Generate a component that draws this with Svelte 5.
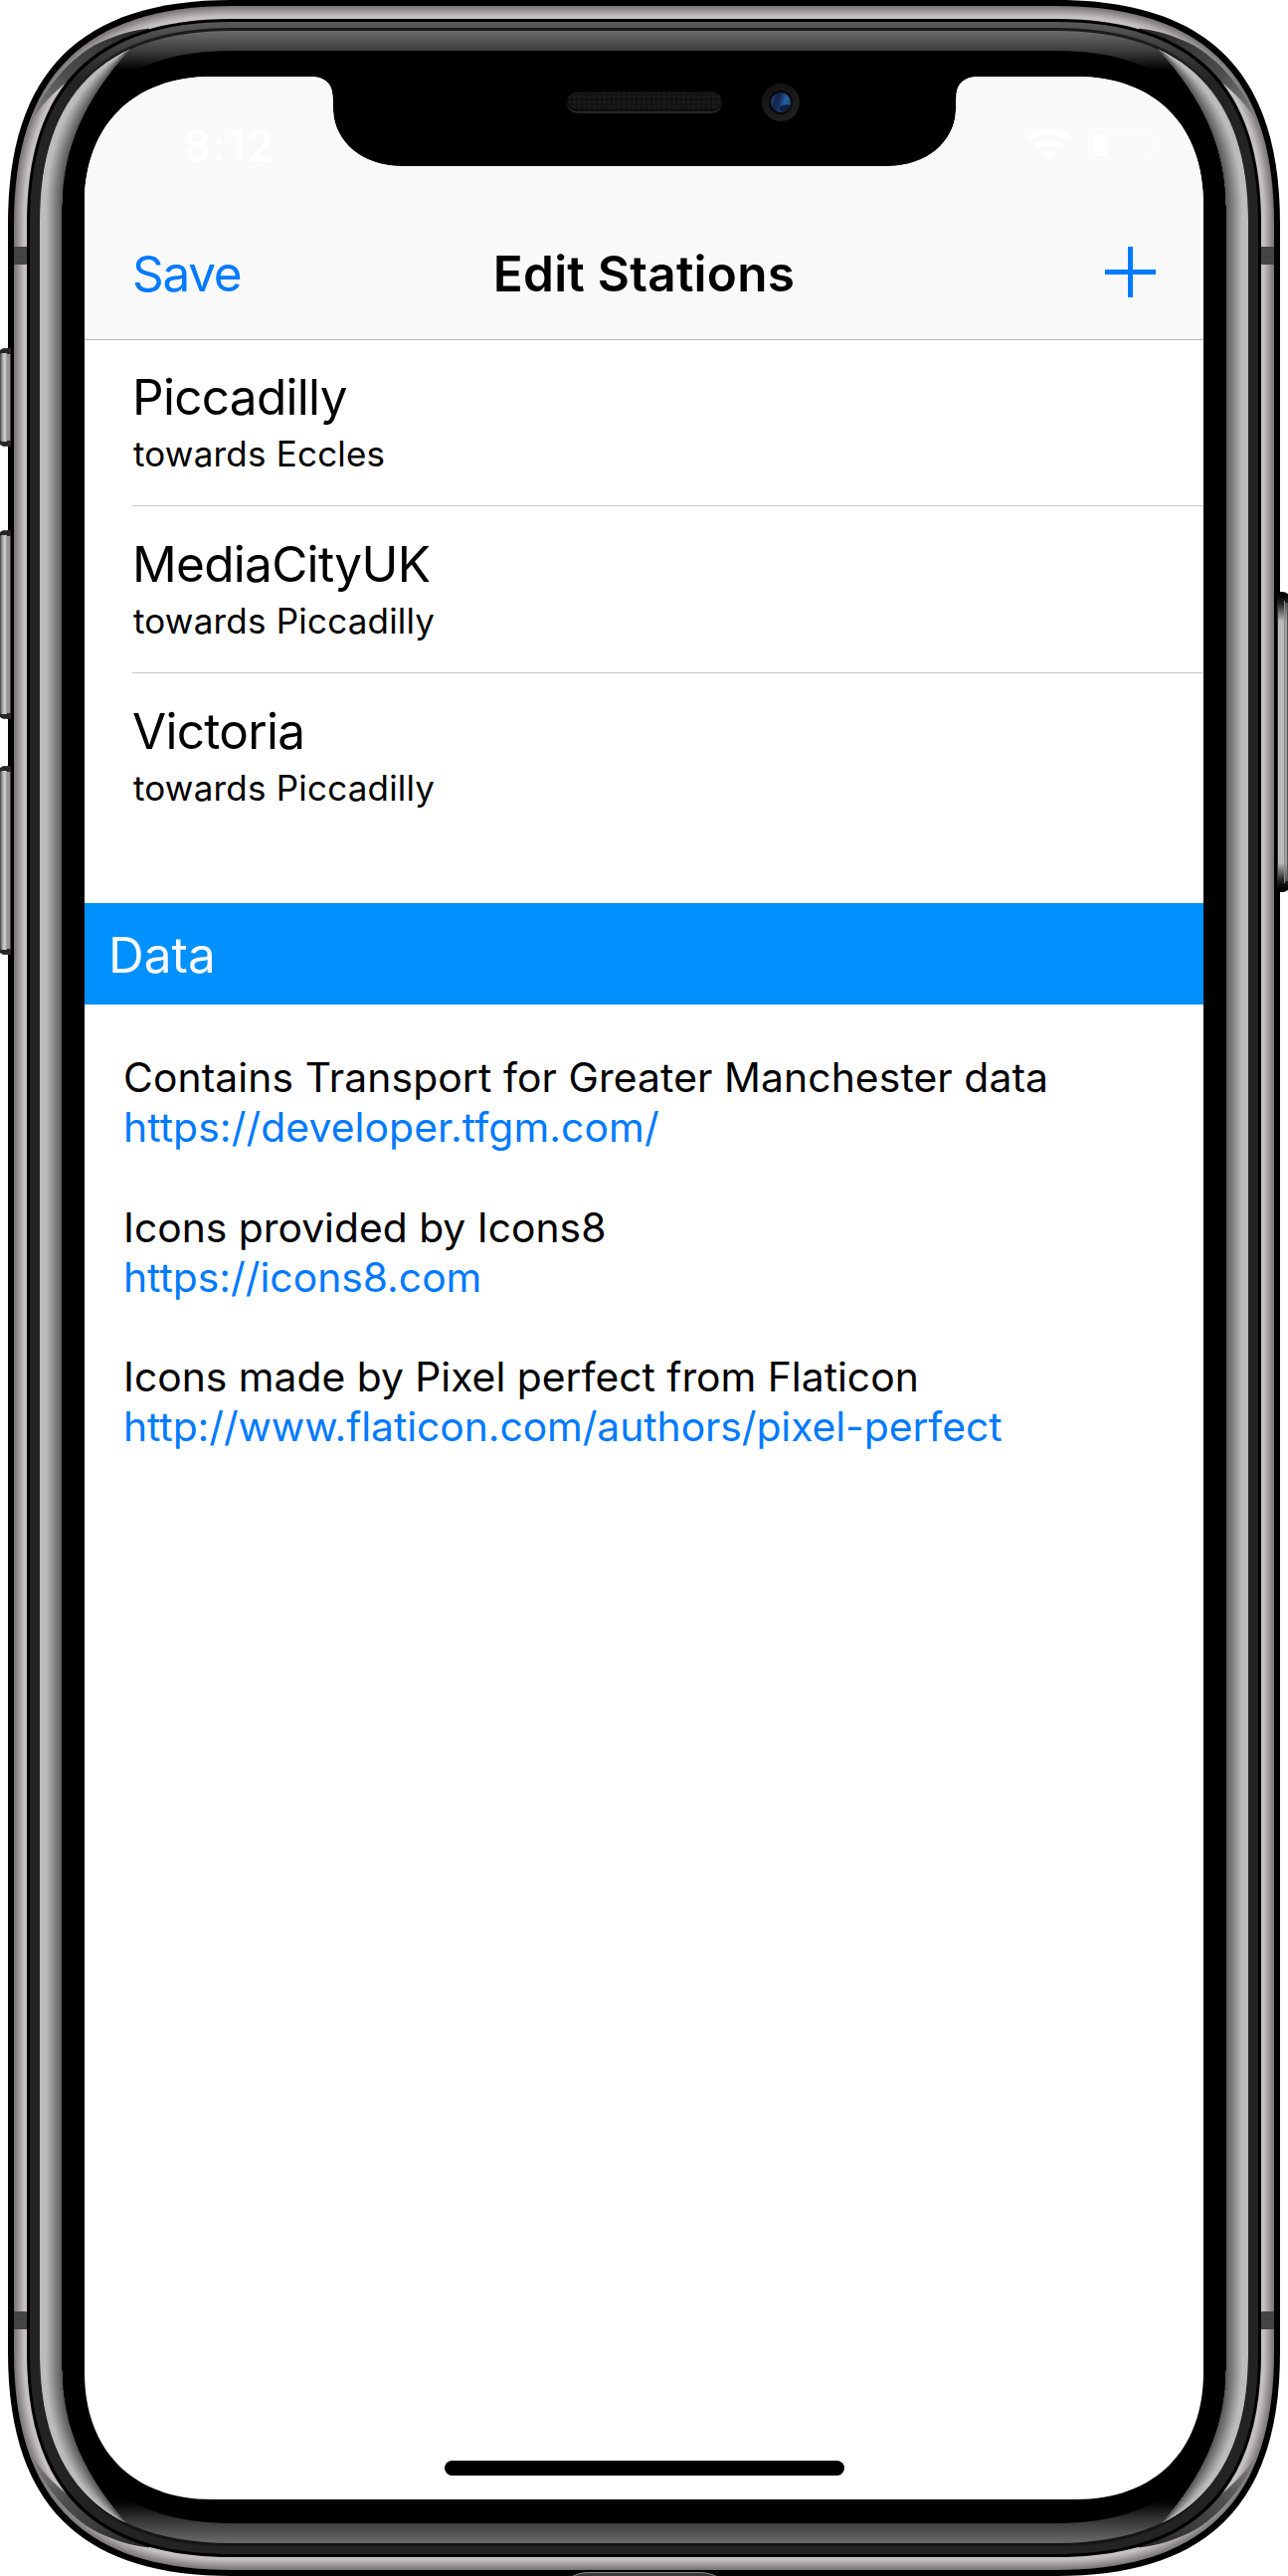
<script>
  const stations = [
    { name: 'Piccadilly', direction: 'towards Eccles' },
    { name: 'MediaCityUK', direction: 'towards Piccadilly' },
    { name: 'Victoria', direction: 'towards Piccadilly' }
  ];

  const credits = [
    { text: 'Contains Transport for Greater Manchester data', url: 'https://developer.tfgm.com/' },
    { text: 'Icons provided by Icons8', url: 'https://icons8.com' },
    { text: 'Icons made by Pixel perfect from Flaticon', url: 'http://www.flaticon.com/authors/pixel-perfect' }
  ];

  // Mute switch, volume up, volume down: top edge and height.
  const keys = [
    [350, 99],
    [533, 190],
    [770, 190]
  ];

  // Continuous-curvature rounded rectangle, inset from the outer edge of the phone.
  function shell(side, top = side, bottom = top) {
    const x0 = 8 + side, x1 = 1287 - side, y0 = top, y1 = 2590 - bottom;
    const r = 225 - side;
    const a = (8 * (55.3 - 0.23 * side) - r) / 3;
    return `M${x0},${y0 + r}C${x0},${y0 + a} ${x0 + a},${y0} ${x0 + r},${y0}` +
      `H${x1 - r}C${x1 - a},${y0} ${x1},${y0 + a} ${x1},${y0 + r}` +
      `V${y1 - r}C${x1},${y1 - a} ${x1 - a},${y1} ${x1 - r},${y1}` +
      `H${x0 + r}C${x0 + a},${y1} ${x0},${y1 - a} ${x0},${y1 - r}Z`;
  }

  const mix = (a, b, t) => Math.round(a + (b - a) * t);

  const rail = Array.from({ length: 13 }, (_, i) => {
    const t = Math.min(1, i / 10);
    return { d: shell(6 + i), fill: `rgb(${mix(122, 198, t)},${mix(118, 194, t)},${mix(120, 196, t)})` };
  });

  // Side reflection: nested blades that share their tips and darken inwards.
  const blades = Array.from({ length: 22 }, (_, i) => {
    const t = i / 22;
    const l = (a, b) => a + (b - a) * t;
    const x = l(40, 62), y = l(213, 207);
    const c1 = [l(40, 62), l(135, 150)], c2 = [l(72, 84), l(75, 100)];
    const v = t < 0.25 ? 188 : mix(188, 88, (t - 0.25) / 0.75);
    const start = i === 0 ? 'M20,213C20,120 60,50 129,40L131,49' : `M${x},${y}C${c1} ${c2} 130,49`;
    const end = i === 0 ? 'L131,2541L129,2550C60,2540 20,2470 20,2377Z' : `C${c2[0]},${2590 - c2[1]} ${c1[0]},${2590 - c1[1]} ${x},${2590 - y}Z`;
    const inner = `C84,100 62,150 62,207V2383C62,2440 84,2490 130,2541`;
    return { d: start + inner + end, fill: `rgb(${v},${v},${v})` };
  });
</script>

{#snippet side()}
  <g clip-path="url(#glass)">
    {#each blades as blade}
      <path d={blade.d} fill={blade.fill} />
    {/each}
    <path d="M130,49C84,100 62,150 62,207M62,2383C62,2440 84,2490 130,2541" fill="none" stroke="#5c5c5c" stroke-width="1.200" />
  </g>
{/snippet}

{#snippet streak()}
  <path
    d="M28,128C42,92 70,57 100,43C115,36 130,31 150,28.500V34L75,76C60,88 40,104 28,128Z"
    fill="url(#streak)"
  />
{/snippet}

<div class="phone">
  <svg class="frame" viewBox="0 0 1295 2590" width="1295" height="2590" aria-hidden="true">
    <defs>
      <clipPath id="glass"><path d={shell(32, 31, 33)} /></clipPath>
      <linearGradient id="lip" gradientUnits="userSpaceOnUse" x1="0" y1="22" x2="0" y2="80">
        <stop offset="0" stop-color="#5a5a5a" />
        <stop offset="0.4" stop-color="#404040" />
        <stop offset="1" stop-color="#232323" />
      </linearGradient>
      <linearGradient id="edge" gradientUnits="userSpaceOnUse" x1="0" y1="0" x2="0" y2="2590">
        <stop offset="0.02" stop-color="#1c1c1c" />
        <stop offset="0.035" stop-color="#232323" />
        <stop offset="0.965" stop-color="#232323" />
        <stop offset="0.98" stop-color="#141414" />
      </linearGradient>
      <linearGradient id="bezel" gradientUnits="userSpaceOnUse" x1="0" y1="0" x2="0" y2="2590">
        <stop offset="0.01197" stop-color="#6c6c6c" />
        <stop offset="0.0197" stop-color="#3c3c3c" />
        <stop offset="0.0274" stop-color="#000" />
        <stop offset="0.971" stop-color="#000" />
        <stop offset="0.9795" stop-color="#3e3e3e" />
        <stop offset="0.98726" stop-color="#6a6a6a" />
      </linearGradient>
      <linearGradient id="streak" gradientUnits="userSpaceOnUse" x1="30" y1="120" x2="130" y2="35">
        <stop offset="0" stop-color="#858384" />
        <stop offset="0.45" stop-color="#4c4c4c" />
        <stop offset="1" stop-color="#2c2c2c" />
      </linearGradient>
      <linearGradient id="key" x1="0" x2="1" y1="0" y2="0">
        <stop offset="0" stop-color="#444" />
        <stop offset="0.2" stop-color="#999" />
        <stop offset="0.4" stop-color="#d2d2d2" />
        <stop offset="0.62" stop-color="#a4a4a4" />
        <stop offset="0.85" stop-color="#8c8c8c" />
        <stop offset="1" stop-color="#333" />
      </linearGradient>
      <linearGradient id="power" x1="0" x2="0" y1="0" y2="1">
        <stop offset="0" stop-color="#000" />
        <stop offset="0.03" stop-color="#222" />
        <stop offset="0.09" stop-color="#bbb" />
        <stop offset="0.91" stop-color="#bbb" />
        <stop offset="0.97" stop-color="#222" />
        <stop offset="1" stop-color="#000" />
      </linearGradient>
      <linearGradient id="lens" x1="0" x2="1" y1="0" y2="0.3">
        <stop offset="0" stop-color="#2a68a0" />
        <stop offset="0.3" stop-color="#14264c" />
        <stop offset="0.5" stop-color="#142a55" />
        <stop offset="0.8" stop-color="#2263a4" />
        <stop offset="1" stop-color="#1a4f88" />
      </linearGradient>
      <linearGradient id="ring" x1="0" x2="0.6" y1="0" y2="1">
        <stop offset="0" stop-color="#101010" />
        <stop offset="1" stop-color="#202020" />
      </linearGradient>
      <pattern id="mesh" width="5" height="5" patternUnits="userSpaceOnUse">
        <rect width="5" height="5" fill="#121212" />
        <rect width="3" height="3" x="1" y="1" fill="#1b1b1b" />
      </pattern>
    </defs>

    {#each keys as [y, h]}
      <rect x="-3" {y} width="16" height={h} rx="9" fill="#262626" />
      <rect x="0" y={y + 5} width="11" height={h - 10} rx="2" fill="url(#key)" />
    {/each}
    <rect x="1278" y="595" width="20" height="302" rx="9" fill="#000" />

    <path d={shell(0)} fill="#000" />
    {#each keys as [y, h]}
      <path d="M7,{y}H11V{y + h}H7Z" fill="#262626" />
      <path d="M7,{y + 6}H11V{y + h - 6}H7Z" fill="#949494" />
      <path d="M10,{y + 6}H11V{y + h - 6}H10Z" fill="#444" />
    {/each}
    <rect x="1284" y="598" width="11" height="296" rx="4" fill="url(#power)" />
    <path d="M1284.500,610V882" stroke="#333" />
    <path d="M1291.500,604V888M1293,606V886" stroke="#8a8a8a" />
    <path d="M1294.500,606V886" stroke="#555" />

    {#each rail as ring}
      <path d={ring.d} fill={ring.fill} />
    {/each}
    {@render streak()}
    <g transform="translate(1295 0) scale(-1 1)">{@render streak()}</g>
    <g transform="translate(0 2590) scale(1 -1)">{@render streak()}</g>
    <g transform="translate(1295 2590) scale(-1 -1)">{@render streak()}</g>
    <path d="M14,248H27V266H14ZM1268,248H1281V266H1268ZM14,2324H27V2342H14ZM1268,2324H1281V2342H1268Z" fill="#444" />

    <path d={shell(19)} fill="#000" />
    <path d={shell(22)} fill="url(#lip)" />
    <path d={shell(31, 28, 30)} fill="url(#edge)" />
    <path d={shell(32, 31, 33)} fill="url(#bezel)" />
    <path d={shell(54, 51, 53)} fill="#000" />
    {@render side()}
    <g transform="translate(1295 0) scale(-1 1)">{@render side()}</g>

    <path d="M573,2592C580,2587 588,2586.500 596,2586.500H700C708,2586.500 715,2587 723,2592Z" fill="#3a3a3a" stroke="#888" />

    <rect x="570" y="94" width="156" height="20" rx="10" fill="#242424" />
    <rect x="570" y="92.500" width="156" height="19" rx="9.500" fill="#080808" />
    <rect x="571" y="92.500" width="154" height="17.500" rx="8.700" fill="url(#mesh)" />
    <circle cx="785" cy="103" r="19" fill="url(#ring)" />
    <circle cx="785" cy="103" r="12" fill="#080808" />
    <circle cx="785" cy="103" r="10" fill="url(#lens)" />
    <path d="M784,107Q790,104 795,106Q791,114 784,112Z" fill="#121f42" />
  </svg>

  <main class="screen">
    <header>
      <div class="status">
        <span class="clock">8:12</span>
        <svg width="201" height="36" viewBox="0 0 201 36" aria-hidden="true">
          <g fill="#fafafa">
            <circle cx="6" cy="29" r="5" />
            <circle cx="20" cy="29" r="5" />
            <circle cx="34" cy="29" r="5" />
            <circle cx="48" cy="29" r="5" />
          </g>
          <g fill="none" stroke="#fff">
            <path d="M69,12.500A31,31 0 0 1 111,12.500" stroke-width="7" />
            <path d="M77,20.500A19,19 0 0 1 103,20.500" stroke-width="6.500" />
          </g>
          <path d="M90,34L83,27Q90,21 97,27Z" fill="#fff" />
          <rect x="129.500" y="2.500" width="64" height="31" rx="8" fill="none" stroke="#fbfbfb" stroke-width="3" />
          <rect x="133.500" y="7" width="15" height="22" rx="4" fill="#fff" />
          <path d="M197,13Q201,15 201,18Q201,21 197,23Z" fill="#fbfbfb" />
        </svg>
      </div>
      <nav>
        <button class="save">Save</button>
        <h1>Edit Stations</h1>
        <button class="add" aria-label="Add station">
          <svg width="51" height="51" viewBox="0 0 51 51"><path d="M25.500,0V51M0,25.500H51" stroke="#007aff" stroke-width="5" /></svg>
        </button>
      </nav>
    </header>

    <ul class="stations">
      {#each stations as station}
        <li>
          <strong>{station.name}</strong>
          <span>{station.direction}</span>
        </li>
      {/each}
    </ul>

    <h2>Data</h2>

    <section class="credits">
      {#each credits as credit}
        <p>{credit.text}<br /><a href={credit.url}>{credit.url}</a></p>
      {/each}
    </section>

    <div class="home"></div>
  </main>
</div>

<style>
  :global(body) {
    margin: 0;
    background: #fff;
  }

  .phone {
    position: relative;
    box-sizing: border-box;
    width: 1295px;
    height: 2590px;
    padding: 77px 85px;
    overflow: hidden;
    font-family: Inter, 'Liberation Sans', sans-serif;
    color: #000;
  }

  .frame {
    position: absolute;
    inset: 0;
  }

  /* Display outline with the sensor notch cut out of its top edge */
  .screen {
    position: relative;
    display: flex;
    flex-direction: column;
    width: 1125px;
    height: 2436px;
    background: #fff;
    clip-path: path('M0,128C0,49 49,0 128,0H226C242,0 249,7 249.500,20C250,25 249.500,27 250,34C251,65 279,90 318,90H808C847,90 875,65 876,34C876.500,27 876,25 876.500,20C877,7 884,0 900,0H997C1076,0 1125,49 1125,128V2308C1125,2387 1076,2436 997,2436H128C49,2436 0,2387 0,2308Z');
  }

  header {
    position: relative;
    flex: none;
    height: 264px;
    background: #f9f9f9;
    box-shadow: 0 1px #b2b2b2;
  }

  .status {
    display: flex;
    align-items: center;
    justify-content: space-between;
    box-sizing: border-box;
    height: 132px;
    padding: 6px 44px 0 99px;
    color: #fff;
  }

  .clock {
    font-size: 44px;
    font-weight: 600;
    letter-spacing: 1px;
  }

  nav {
    display: grid;
    grid-template-columns: 1fr auto 1fr;
    align-items: center;
    height: 132px;
    padding: 0 48px;
  }

  button {
    margin: 0;
    padding: 0;
    border: 0;
    background: none;
    font: inherit;
    color: #007aff;
  }

  .save {
    justify-self: start;
    font-size: 49.5px;
    line-height: 62px;
    letter-spacing: -1.3px;
  }

  .add {
    justify-self: end;
    height: 51px;
    margin-top: -3px;
  }

  .add svg {
    display: block;
  }

  h1 {
    margin: 0;
    font-size: 49.5px;
    line-height: 62px;
    font-weight: 600;
    letter-spacing: 0.25px;
  }

  .stations {
    margin: 0;
    padding: 0 0 0 48px;
    list-style: none;
  }

  li {
    display: flex;
    flex-direction: column;
    box-sizing: border-box;
    height: 168px;
    padding-top: 27px;
  }

  li:not(:last-child) {
    border-bottom: 1px solid #c6c5c9;
  }

  strong {
    font-size: 49.5px;
    line-height: 62px;
    font-weight: 400;
    letter-spacing: -0.7px;
  }

  li span {
    padding-left: 1px;
    font-size: 35px;
    line-height: 52px;
    letter-spacing: 0.2px;
  }

  h2 {
    box-sizing: border-box;
    height: 102px;
    margin: 63px 0 0;
    padding: 2px 0 0 24px;
    background: #0091ff;
    color: #f9f9f9;
    font-size: 49.5px;
    line-height: 100px;
    font-weight: 400;
    letter-spacing: 0;
  }

  .credits {
    display: flex;
    flex-direction: column;
    gap: 50.2px;
    padding: 48px 0 0 39px;
    font-size: 40.8px;
    line-height: 50.2px;
  }

  .credits p {
    margin: 0;
  }

  .credits p:first-child {
    letter-spacing: 0.1px;
  }

  .credits p:last-child a {
    letter-spacing: -0.06px;
  }

  a {
    color: #007aff;
    text-decoration: none;
  }

  .home {
    width: 402px;
    height: 15px;
    margin: auto auto 24px;
    border-radius: 8px;
    background: #000;
  }
</style>
